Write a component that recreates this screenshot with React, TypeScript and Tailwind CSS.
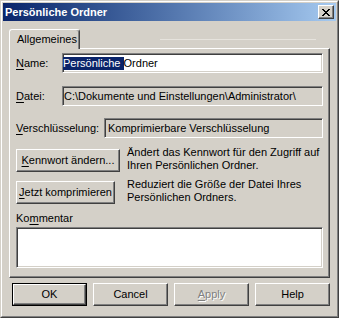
import React from "react";

const raised =
  "border border-t-white border-l-white border-r-[#404040] border-b-[#404040] shadow-[inset_-1px_-1px_0_#808080]";
const sunken =
  "border border-t-[#808080] border-l-[#808080] border-r-white border-b-white shadow-[inset_1px_1px_0_#404040,inset_-1px_-1px_0_#d4d0c8]";

function Key({ children }: { children: string }) {
  return <span className="underline underline-offset-[2px]">{children}</span>;
}

function CloseGlyph() {
  const rows: [number, number][][] = [
    [[0, 2], [6, 2]],
    [[1, 2], [5, 2]],
    [[2, 4]],
    [[3, 2]],
    [[2, 4]],
    [[1, 2], [5, 2]],
    [[0, 2], [6, 2]],
  ];
  return (
    <svg width="8" height="7" viewBox="0 0 8 7" shapeRendering="crispEdges">
      {rows.map((r, y) =>
        r.map(([x, w]) => <rect key={`${y}-${x}`} x={x} y={y} width={w} height={1} fill="#000" />)
      )}
    </svg>
  );
}

function Button({
  children,
  className = "",
  isDefault = false,
}: {
  children: React.ReactNode;
  className?: string;
  isDefault?: boolean;
}) {
  if (isDefault) {
    return (
      <div className={`h-[23px] border border-black ${className}`}>
        <div className={`h-full flex items-center justify-center ${raised}`}>{children}</div>
      </div>
    );
  }
  return <div className={`h-[23px] flex items-center justify-center ${raised} ${className}`}>{children}</div>;
}

export default function App() {
  return (
    <div className="w-[339px] h-[318px] bg-[#d4d0c8] text-black text-[11px] leading-[13px] font-['Liberation_Sans',Arial,sans-serif] border border-t-[#d4d0c8] border-l-[#d4d0c8] border-r-[#404040] border-b-[#404040]">
      <div className="h-full p-px flex flex-col border border-t-white border-l-white border-r-[#808080] border-b-[#808080]">
        {/* title bar */}
        <div className="h-[18px] flex items-center justify-between pl-[2px] pr-[2px] bg-linear-to-r from-[#0a246a] to-[#a6caf0]">
          <span className="text-white font-bold text-[11px]">Persönliche Ordner</span>
          <div className={`w-[16px] h-[14px] bg-[#d4d0c8] flex items-center justify-center ${raised}`}>
            <CloseGlyph />
          </div>
        </div>

        <div className="flex flex-col px-[6px] pt-[8px]">
          {/* tab strip */}
          <div className="flex items-start">
            <div className="relative z-10 -mb-px w-[71px] h-[20px] pl-[7px] pt-[3px] bg-[#d4d0c8] rounded-t-[3px] border-t border-l border-r border-t-white border-l-white border-r-[#404040] shadow-[inset_-1px_0_0_#808080]">
              Allgemeines
            </div>
            <div className="ml-[80px] mt-[10px] w-[156px] h-px bg-[#e6e3dd]" />
          </div>

          {/* panel */}
          <div className={`h-[230px] flex flex-col px-[6px] pt-[4px] pb-[7px] ${raised}`}>
            <div className="flex items-center h-[20px]">
              <div className="w-[46px]">
                <Key>N</Key>ame:
              </div>
              <div className={`flex-1 h-[20px] bg-white flex items-center whitespace-pre ${sunken}`}>
                <span className="bg-[#0a246a] text-white">Persönliche </span>Ordner
              </div>
            </div>

            <div className="flex items-center h-[20px] mt-[13px]">
              <div className="w-[46px]">
                <Key>D</Key>atei:
              </div>
              <div className={`flex-1 h-[20px] flex items-center pl-[1px] ${sunken}`}>
                C:\Dokumente und Einstellungen\Administrator\
              </div>
            </div>

            <div className="flex items-center h-[20px] mt-[12px]">
              <div className="w-[88px]">
                <Key>V</Key>erschlüsselung:
              </div>
              <div className={`flex-1 h-[20px] flex items-center pl-[3px] ${sunken}`}>
                Komprimierbare Verschlüsselung
              </div>
            </div>

            <div className="flex items-start mt-[11px]">
              <div className="w-[111px]">
                <Button className="w-[104px]">
                  <span>
                    <Key>K</Key>ennwort ändern...
                  </span>
                </Button>
              </div>
              <div className="-mt-[3px]">
                Ändert das Kennwort für den Zugriff auf
                <br />
                Ihren Persönlichen Ordner.
              </div>
            </div>

            <div className="flex items-start mt-[9px]">
              <div className="w-[111px]">
                <Button className="w-[99px]">
                  <span>
                    <Key>J</Key>etzt komprimieren
                  </span>
                </Button>
              </div>
              <div className="-mt-[3px]">
                Reduziert die Größe der Datei Ihres
                <br />
                Persönlichen Ordners.
              </div>
            </div>

            <div className="mt-[8px]">
              Ko<Key>m</Key>mentar
            </div>
            <div className={`mt-[2px] h-[41px] bg-white ${sunken}`} />
          </div>

          {/* bottom buttons */}
          <div className="flex justify-end gap-[6px] mt-[5px]">
            <Button isDefault className="w-[75px]">
              OK
            </Button>
            <Button className="w-[75px]">Cancel</Button>
            <Button className="w-[75px]">
              <span className="text-[#808080] [text-shadow:1px_1px_0_#fff]">
                <Key>A</Key>pply
              </span>
            </Button>
            <Button className="w-[75px]">Help</Button>
          </div>
        </div>
      </div>
    </div>
  );
}
